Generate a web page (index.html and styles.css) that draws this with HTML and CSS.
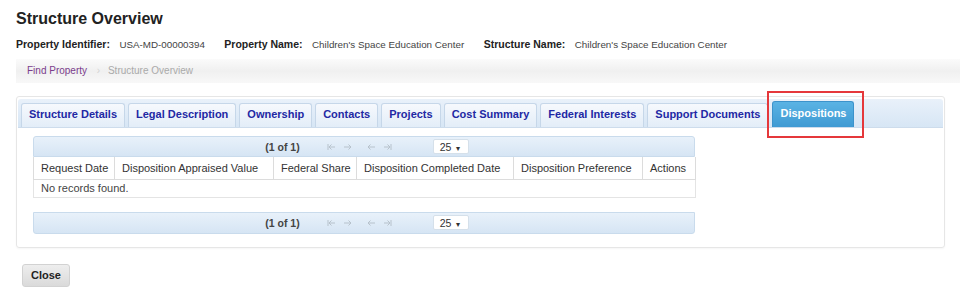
FILE: index.html
```html
<!DOCTYPE html>
<html lang="en">
<head>
  <meta charset="UTF-8" />
  <title>Structure Overview</title>
  <link rel="stylesheet" href="styles.css">
</head>
<body>
  <div class="page">
    <h1>Structure Overview</h1>

    <div class="props">
      <span class="prop-label">Property Identifier:</span>
      <span class="prop-value">USA-MD-00000394</span>
      <span class="prop-label">Property Name:</span>
      <span class="prop-value">Children's Space Education Center</span>
      <span class="prop-label">Structure Name:</span>
      <span class="prop-value">Children's Space Education Center</span>
    </div>

    <div class="crumbs">
      <a class="crumb-link" href="#">Find Property</a>
      <span class="crumb-sep">&rsaquo;</span>
      <span class="crumb-current">Structure Overview</span>
    </div>

    <div class="tabview">
      <ul class="tab-nav">
        <li class="tab">Structure Details</li>
        <li class="tab">Legal Description</li>
        <li class="tab">Ownership</li>
        <li class="tab">Contacts</li>
        <li class="tab">Projects</li>
        <li class="tab">Cost Summary</li>
        <li class="tab">Federal Interests</li>
        <li class="tab">Support Documents</li>
        <li class="tab tab-active">Dispositions<span class="highlight"></span></li>
      </ul>

      <div class="tab-panel">
        <div class="datatable">
          <div class="paginator">
            <span class="page-count">(1 of 1)</span>
            <span class="page-icons">
              <svg width="9" height="8" viewBox="0 0 9 8"><path d="M1 1v6M8 4H2M4.5 1.5 2 4l2.5 2.5" fill="none" stroke="#b7c2cc" stroke-width="1"/></svg>
              <svg width="9" height="8" viewBox="0 0 9 8"><path d="M1 4h7M5.5 1.5 8 4 5.5 6.5" fill="none" stroke="#b7c2cc" stroke-width="1"/></svg>
            </span>
            <span class="page-icons page-icons-next">
              <svg width="9" height="8" viewBox="0 0 9 8"><path d="M8 4H1M3.5 1.5 1 4l2.5 2.5" fill="none" stroke="#b7c2cc" stroke-width="1"/></svg>
              <svg width="9" height="8" viewBox="0 0 9 8"><path d="M8 1v6M1 4h6M4.5 1.5 7 4 4.5 6.5" fill="none" stroke="#b7c2cc" stroke-width="1"/></svg>
            </span>
            <span class="rows-select">25 <span class="caret">&#9662;</span></span>
          </div>

          <table class="grid">
            <thead>
              <tr>
                <th class="col-req">Request Date</th>
                <th class="col-val">Disposition Appraised Value</th>
                <th class="col-share">Federal Share</th>
                <th class="col-done">Disposition Completed Date</th>
                <th class="col-pref">Disposition Preference</th>
                <th class="col-act">Actions</th>
              </tr>
            </thead>
            <tbody>
              <tr>
                <td colspan="6">No records found.</td>
              </tr>
            </tbody>
          </table>

          <div class="paginator paginator-bottom">
            <span class="page-count">(1 of 1)</span>
            <span class="page-icons">
              <svg width="9" height="8" viewBox="0 0 9 8"><path d="M1 1v6M8 4H2M4.5 1.5 2 4l2.5 2.5" fill="none" stroke="#b7c2cc" stroke-width="1"/></svg>
              <svg width="9" height="8" viewBox="0 0 9 8"><path d="M1 4h7M5.5 1.5 8 4 5.5 6.5" fill="none" stroke="#b7c2cc" stroke-width="1"/></svg>
            </span>
            <span class="page-icons page-icons-next">
              <svg width="9" height="8" viewBox="0 0 9 8"><path d="M8 4H1M3.5 1.5 1 4l2.5 2.5" fill="none" stroke="#b7c2cc" stroke-width="1"/></svg>
              <svg width="9" height="8" viewBox="0 0 9 8"><path d="M8 1v6M1 4h6M4.5 1.5 7 4 4.5 6.5" fill="none" stroke="#b7c2cc" stroke-width="1"/></svg>
            </span>
            <span class="rows-select">25 <span class="caret">&#9662;</span></span>
          </div>
        </div>
      </div>
    </div>

    <button class="close-btn">Close</button>
  </div>
</body>
</html>
```

FILE: styles.css
```css
* {
  box-sizing: border-box;
}

body {
  margin: 0;
  font-family: 'Liberation Sans', Arial, sans-serif;
  color: #333;
  background: #fff;
}

.page {
  padding: 0 25px 0 16px;
}

h1 {
  margin: 9px 0 0;
  font-size: 16px;
  line-height: 20px;
  font-weight: bold;
  color: #222;
}

.props {
  margin-top: 7px;
  line-height: 14px;
  white-space: nowrap;
}

.prop-label {
  font-size: 10.5px;
  font-weight: bold;
  color: #222;
  margin-right: 5px;
}

.prop-value {
  font-size: 9.8px;
  color: #444;
  margin-right: 15px;
}

.crumbs {
  margin-top: 7px;
  margin-right: -15px;
  height: 24px;
  line-height: 24px;
  padding-left: 11px;
  font-size: 10px;
  background: linear-gradient(to bottom, #fbfbfb, #f0f0f0 50%, #f8f8f8);
}

.crumb-link {
  color: #7b3d8c;
  text-decoration: none;
}

.crumb-sep {
  color: #d4d4d4;
  margin: 0 5px 0 7px;
}

.crumb-current {
  color: #aaa;
}

.tabview {
  margin-top: 13px;
  border: 1px solid #e6e6e6;
  border-radius: 3px;
  padding: 2px 1px 13px;
  box-shadow: 0 1px 2px rgba(0, 0, 0, 0.04);
}

.tab-nav {
  list-style: none;
  margin: 0;
  padding: 2px 4px 0 3px;
  height: 29px;
  display: flex;
  align-items: flex-end;
  gap: 3px;
  background: linear-gradient(to bottom, #e9f1fa, #d7e6f5);
  border-bottom: 1px solid #cddcec;
  border-radius: 3px 3px 0 0;
}

.tab {
  position: relative;
  height: 24px;
  line-height: 21px;
  padding: 0 7px;
  font-size: 11px;
  font-weight: bold;
  color: #2228a4;
  background: linear-gradient(to bottom, #f6f9fd, #e3edf8);
  border: 1px solid #c6d7e9;
  border-bottom: none;
  border-radius: 3px 3px 0 0;
  white-space: nowrap;
}

.tab-active {
  height: 26px;
  line-height: 23px;
  margin-left: 1px;
  color: #fff;
  background: linear-gradient(to bottom, #5ab3e4, #3f9ad3);
  border-color: #3c93cb;
}

.highlight {
  position: absolute;
  left: -6px;
  top: -11px;
  width: 97px;
  height: 47px;
  border: 2px solid #e5383b;
}

.tab-panel {
  padding: 8px 15px 0;
}

.datatable {
  width: 662px;
}

.paginator {
  height: 21px;
  display: flex;
  align-items: center;
  justify-content: center;
  padding-left: 6px;
  font-size: 10.5px;
  background: linear-gradient(to bottom, #e8f1fa, #d6e5f4);
  border: 1px solid #c9dbec;
  border-radius: 3px 3px 0 0;
}

.paginator-bottom {
  height: 22px;
  margin-top: 14px;
  border-radius: 0 0 3px 3px;
}

.page-count {
  color: #444;
  font-weight: bold;
  margin-right: 27px;
}

.page-icons {
  display: flex;
  gap: 7px;
}

.page-icons-next {
  margin-left: 15px;
  margin-right: 41px;
}

.rows-select {
  width: 36px;
  height: 15px;
  line-height: 14px;
  padding-left: 6px;
  background: #fff;
  border: 1px solid #d5e0ea;
  border-radius: 2px;
  color: #333;
  font-size: 10.5px;
}

.caret {
  font-size: 8px;
  margin-left: 2px;
}

.grid {
  width: 100%;
  border-collapse: collapse;
  font-size: 11px;
  table-layout: fixed;
}

.grid th {
  height: 22px;
  padding: 0 7px;
  text-align: left;
  font-weight: normal;
  color: #333;
  white-space: nowrap;
  border: 1px solid #dcdcdc;
  border-top: none;
}

.grid td {
  height: 18px;
  padding: 0 7px;
  color: #444;
  border: 1px solid #e4e4e4;
  border-top: none;
}

.col-req { width: 81px; }
.col-val { width: 159px; }
.col-share { width: 83px; }
.col-done { width: 157px; }
.col-pref { width: 129px; }
.col-act { width: 53px; }

.close-btn {
  margin: 16px 0 0 6px;
  width: 48px;
  height: 23px;
  font-family: 'Liberation Sans', Arial, sans-serif;
  font-size: 11px;
  font-weight: bold;
  color: #222;
  background: linear-gradient(to bottom, #eeeeee, #dadada);
  border: 1px solid #d2d2d2;
  border-radius: 3px;
  cursor: pointer;
}
```
